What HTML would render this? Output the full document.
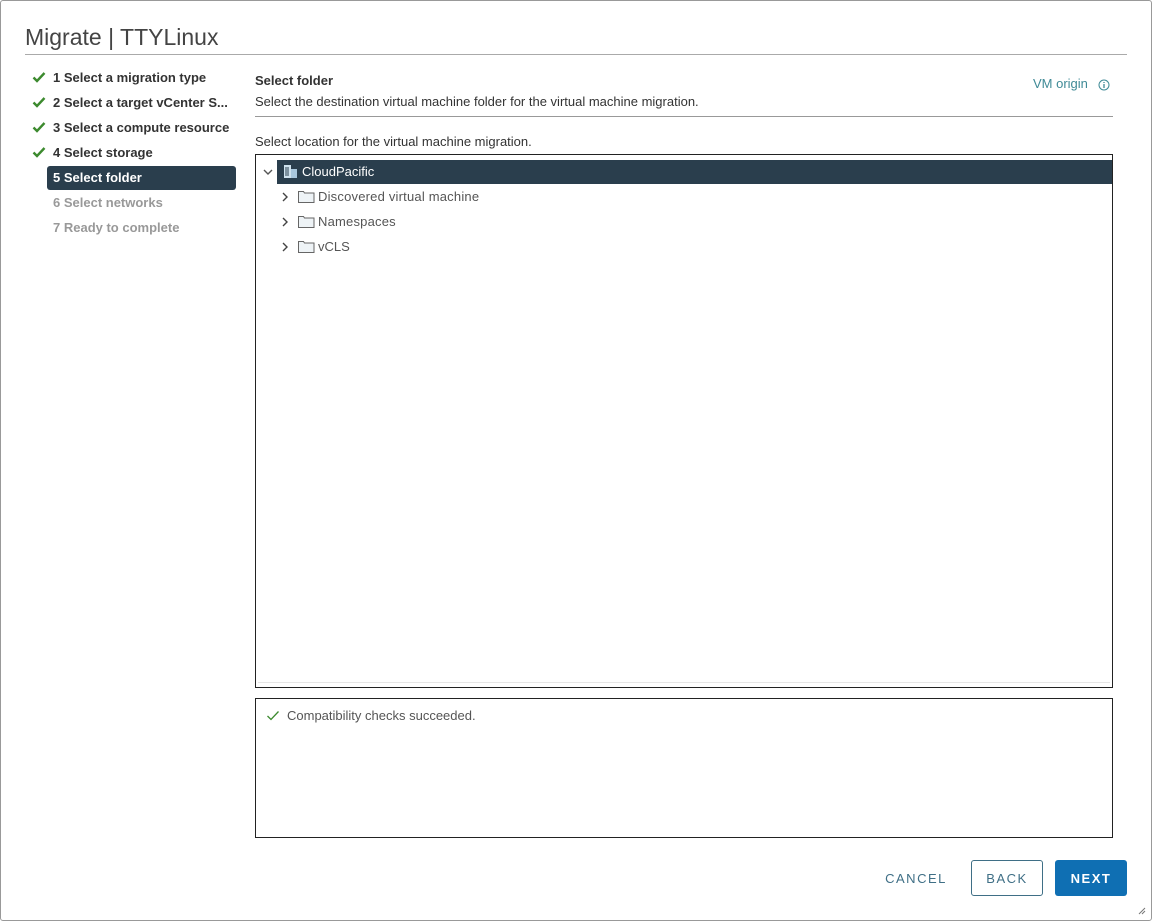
<!DOCTYPE html>
<html><head><style>
*{margin:0;padding:0;box-sizing:border-box}
body{width:1152px;height:921px;background:#fff;font-family:"Liberation Sans",sans-serif;position:relative;overflow:hidden;color:#333}
.frame{position:absolute;left:0;top:0;width:1152px;height:921px;border:1px solid #999;border-radius:3px}
.abs{position:absolute;white-space:nowrap}
.title{left:25px;top:24px;font-size:23px;color:#444}
.hr1{left:25px;top:54px;width:1102px;height:1px;background:#aaa}
.step{left:53px;font-size:13px;font-weight:bold;color:#333;line-height:16px}
.dis{color:#999}
.chk{left:32px;width:14px;height:14px}
.sel{left:47px;top:166px;width:189px;height:24px;background:#2a3e4d;border-radius:3px}
.t13{font-size:13px;line-height:16px}
.tree{left:255px;top:154px;width:858px;height:534px;border:1px solid #222}
.comp{left:255px;top:698px;width:858px;height:140px;border:1px solid #222}
.btn{height:36px;top:860px;font-size:13px;font-weight:bold;letter-spacing:1.5px;line-height:37px;text-align:center;border-radius:3px}
</style></head><body>
<div class="frame"></div>
<div class="abs title">Migrate | TTYLinux</div>
<div class="abs hr1"></div>

<svg class="abs chk" style="top:70px" viewBox="0 0 14 14"><path d="M1.5 7.5l3.5 3.5 7.5-8" fill="none" stroke="#3c8a2e" stroke-width="2.4"/></svg>
<svg class="abs chk" style="top:95px" viewBox="0 0 14 14"><path d="M1.5 7.5l3.5 3.5 7.5-8" fill="none" stroke="#3c8a2e" stroke-width="2.4"/></svg>
<svg class="abs chk" style="top:120px" viewBox="0 0 14 14"><path d="M1.5 7.5l3.5 3.5 7.5-8" fill="none" stroke="#3c8a2e" stroke-width="2.4"/></svg>
<svg class="abs chk" style="top:145px" viewBox="0 0 14 14"><path d="M1.5 7.5l3.5 3.5 7.5-8" fill="none" stroke="#3c8a2e" stroke-width="2.4"/></svg>
<div class="abs step" style="top:70px">1 Select a migration type</div>
<div class="abs step" style="top:95px">2 Select a target vCenter S...</div>
<div class="abs step" style="top:120px">3 Select a compute resource</div>
<div class="abs step" style="top:145px">4 Select storage</div>
<div class="abs sel"></div>
<div class="abs step" style="top:170px;color:#fff">5 Select folder</div>
<div class="abs step dis" style="top:195px">6 Select networks</div>
<div class="abs step dis" style="top:220px">7 Ready to complete</div>

<div class="abs t13" style="left:255px;top:73px;font-weight:bold">Select folder</div>
<div class="abs t13" style="left:255px;top:94px">Select the destination virtual machine folder for the virtual machine migration.</div>
<div class="abs t13" style="left:1033px;top:76px;color:#3f8a96">VM origin</div>
<svg class="abs" style="left:1098px;top:79px" width="12" height="12" viewBox="0 0 12 12"><circle cx="6" cy="6" r="5" fill="none" stroke="#3f8a96" stroke-width="1"/><path d="M6 5v4M6 3v1" stroke="#3f8a96" stroke-width="1.3"/></svg>
<div class="abs" style="left:255px;top:116px;width:858px;height:1px;background:#999"></div>
<div class="abs t13" style="left:255px;top:134px">Select location for the virtual machine migration.</div>

<div class="abs tree"></div>
<div class="abs" style="left:277px;top:160px;width:835px;height:24px;background:#2a3e4d"></div>
<svg class="abs" style="left:262px;top:167px" width="12" height="10" viewBox="0 0 12 10"><path d="M2 3l4 4 4-4" fill="none" stroke="#555" stroke-width="1.4"/></svg>
<svg class="abs" style="left:283px;top:164px" width="15" height="15" viewBox="0 0 15 15"><rect x="1" y="1" width="7" height="13" fill="#cfe2ee"/><rect x="8" y="5" width="6" height="9" fill="#a9c7dc"/><path d="M3 3v9M5 3v9" stroke="#2a3e4d"/></svg>
<div class="abs t13" style="left:302px;top:164px;color:#fff">CloudPacific</div>

<svg class="abs" style="left:280px;top:191px" width="10" height="12" viewBox="0 0 10 12"><path d="M3 2l4 4-4 4" fill="none" stroke="#444" stroke-width="1.4"/></svg>
<svg class="abs" style="left:298px;top:190px" width="17" height="13" viewBox="0 0 17 13"><path d="M0.5 1.5h5l1 1.5h9.5v9.5H0.5z" fill="#eef3f6" stroke="#666"/></svg>
<div class="abs t13" style="left:318px;top:189px;color:#555;letter-spacing:0.2px">Discovered virtual machine</div>
<svg class="abs" style="left:280px;top:216px" width="10" height="12" viewBox="0 0 10 12"><path d="M3 2l4 4-4 4" fill="none" stroke="#444" stroke-width="1.4"/></svg>
<svg class="abs" style="left:298px;top:215px" width="17" height="13" viewBox="0 0 17 13"><path d="M0.5 1.5h5l1 1.5h9.5v9.5H0.5z" fill="#eef3f6" stroke="#666"/></svg>
<div class="abs t13" style="left:318px;top:214px;color:#555;letter-spacing:0.2px">Namespaces</div>
<svg class="abs" style="left:280px;top:241px" width="10" height="12" viewBox="0 0 10 12"><path d="M3 2l4 4-4 4" fill="none" stroke="#444" stroke-width="1.4"/></svg>
<svg class="abs" style="left:298px;top:240px" width="17" height="13" viewBox="0 0 17 13"><path d="M0.5 1.5h5l1 1.5h9.5v9.5H0.5z" fill="#eef3f6" stroke="#666"/></svg>
<div class="abs t13" style="left:318px;top:239px;color:#555">vCLS</div>
<div class="abs" style="left:258px;top:682px;width:852px;height:1px;background:#e6e6e6"></div>

<div class="abs comp"></div>
<svg class="abs" style="left:266px;top:710px" width="14" height="12" viewBox="0 0 14 12"><path d="M1.5 6l3.5 3.5 7.5-8" fill="none" stroke="#3c8a2e" stroke-width="1.3"/></svg>
<div class="abs t13" style="left:287px;top:708px;color:#555">Compatibility checks succeeded.</div>

<div class="abs btn" style="left:880px;width:72px;color:#3f6f86;font-weight:normal">CANCEL</div>
<div class="abs btn" style="left:971px;width:72px;border:1px solid #3f6f86;color:#3f6f86;font-weight:normal;line-height:35px">BACK</div>
<div class="abs btn" style="left:1055px;width:72px;background:#0f6fb3;color:#fff">NEXT</div>
<svg class="abs" style="left:1138px;top:907px" width="8" height="8" viewBox="0 0 8 8"><path d="M1 7L7 1M4 7L7 4" stroke="#777"/></svg>
</body></html>
